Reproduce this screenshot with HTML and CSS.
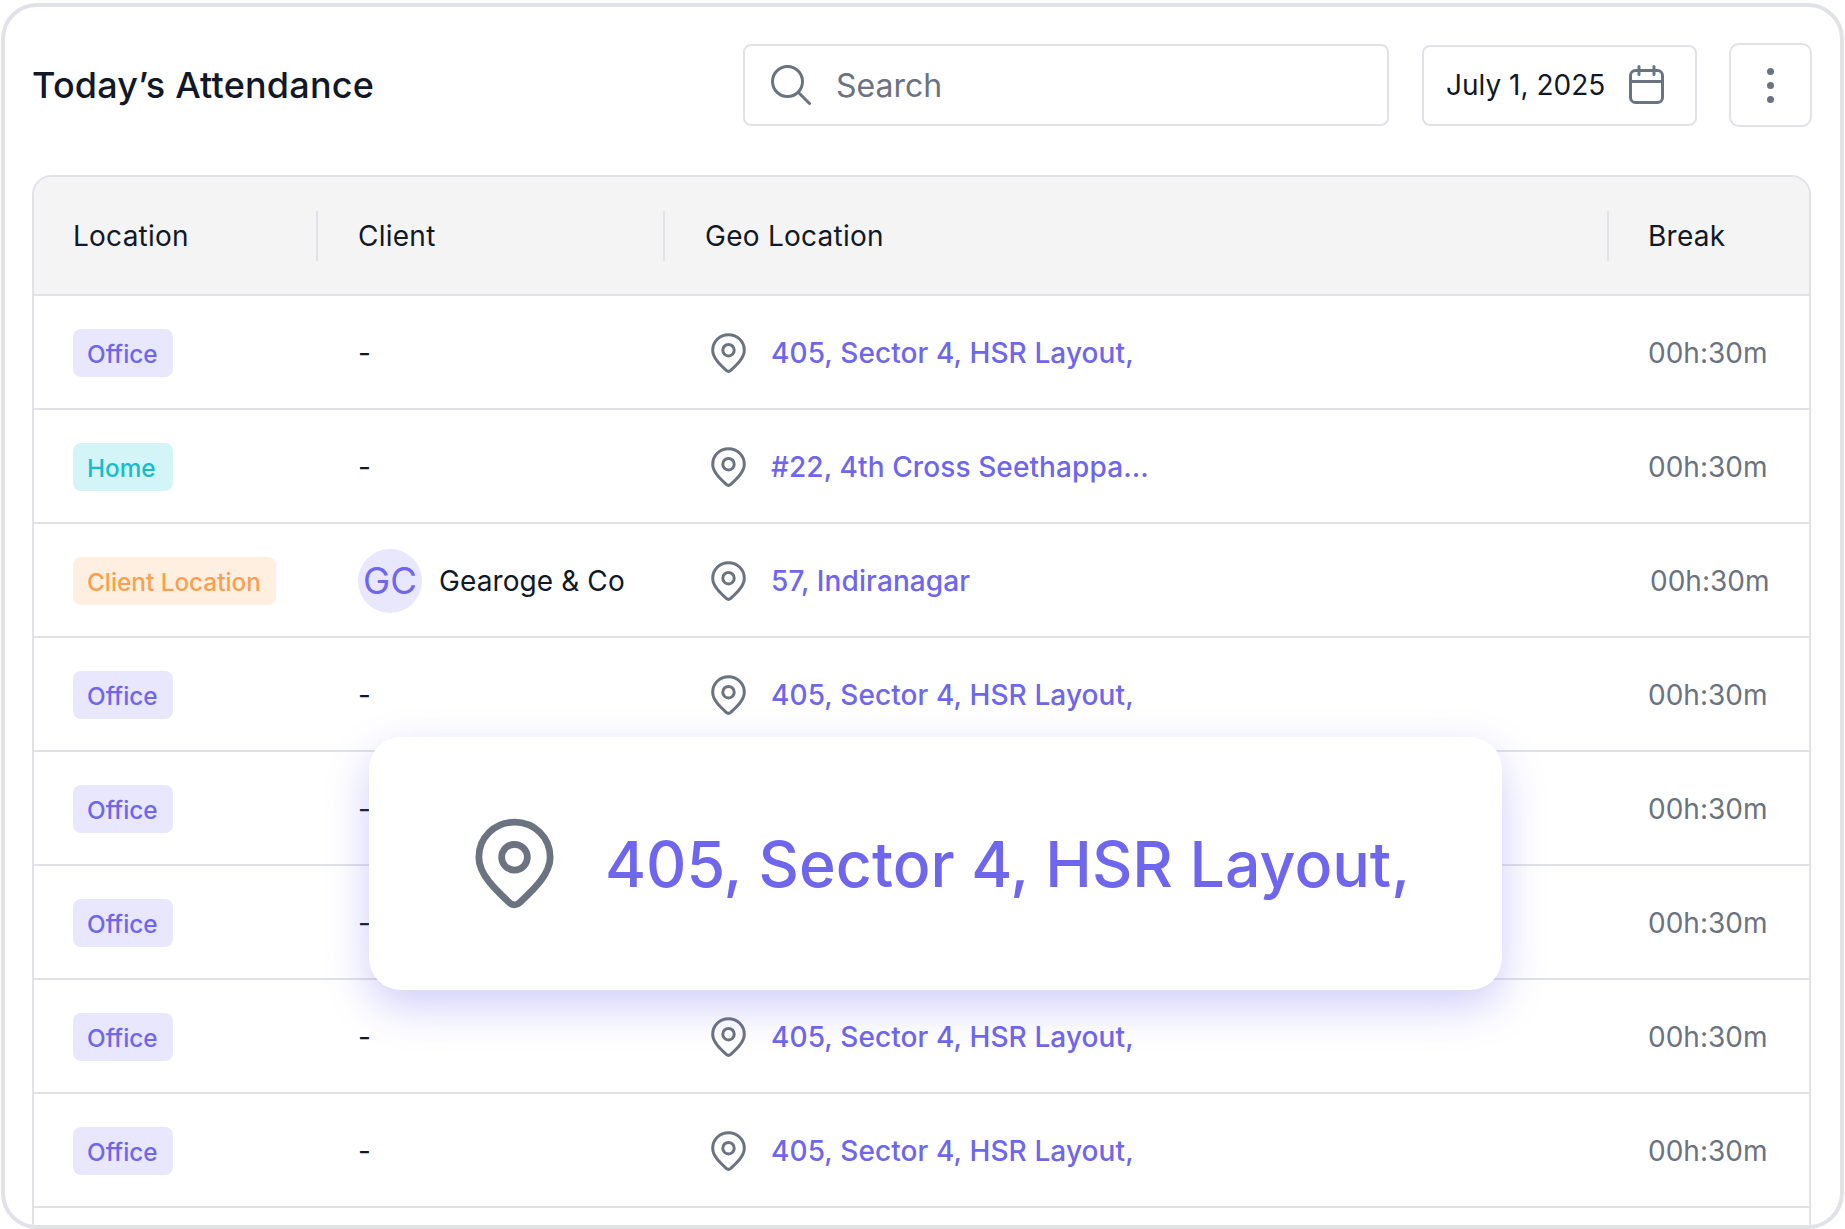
FILE: index.html
```html
<!DOCTYPE html>
<html lang="en">
<head>
<meta charset="utf-8">
<title>Today's Attendance</title>
<link rel="stylesheet" href="styles.css">
</head>
<body>
<svg class="defs" width="0" height="0" aria-hidden="true">
  <symbol id="pin" viewBox="0 0 35 40">
    <path d="M17.5 1.7C8.6 1.7 1.7 8.6 1.7 17.2c0 7.6 7.4 14.4 13.6 20.2 1.3 1.2 3.1 1.2 4.4 0 6.2-5.8 13.6-12.6 13.6-20.2C33.3 8.6 26.4 1.7 17.5 1.7Z" fill="none" stroke="currentColor" stroke-width="3" stroke-linejoin="round"/>
    <circle cx="17.5" cy="17.2" r="5.7" fill="none" stroke="currentColor" stroke-width="3"/>
  </symbol>
</svg>
<main class="card">
  <header class="top">
    <h1 class="title">Today’s Attendance</h1>
    <div class="search">
      <svg class="search-icon" viewBox="0 0 40 40" aria-hidden="true"><circle cx="16.5" cy="16.5" r="15" fill="none" stroke="currentColor" stroke-width="3"/><path d="M27.5 27.5 38.5 38.5" fill="none" stroke="currentColor" stroke-width="3" stroke-linecap="round"/></svg>
      <span class="search-text">Search</span>
    </div>
    <div class="date">
      <span>July 1, 2025</span>
      <svg class="cal-icon" viewBox="0 0 35 39" aria-hidden="true"><rect x="1.5" y="5.5" width="32" height="32" rx="5" fill="none" stroke="currentColor" stroke-width="3"/><path d="M1.5 16.5h32M10 1.5v8M25 1.5v8" fill="none" stroke="currentColor" stroke-width="3" stroke-linecap="round"/></svg>
    </div>
    <button class="more" type="button" aria-label="More">
      <span class="dot"></span><span class="dot"></span><span class="dot"></span>
    </button>
  </header>

  <section class="table">
    <div class="row head">
      <div class="cell"><span>Location</span></div>
      <div class="cell"><span>Client</span></div>
      <div class="cell"><span>Geo Location</span></div>
      <div class="cell head-break"><span>Break</span></div>
    </div>

    <div class="row">
      <div class="cell"><span class="badge office">Office</span></div>
      <div class="cell dash">-</div>
      <div class="cell geo"><svg class="pin"><use href="#pin"/></svg><a class="addr">405, Sector 4, HSR Layout,</a></div>
      <div class="cell break">00h:30m</div>
    </div>
    <div class="row">
      <div class="cell"><span class="badge home">Home</span></div>
      <div class="cell dash">-</div>
      <div class="cell geo"><svg class="pin"><use href="#pin"/></svg><a class="addr">#22, 4th Cross Seethappa...</a></div>
      <div class="cell break">00h:30m</div>
    </div>
    <div class="row">
      <div class="cell"><span class="badge client">Client Location</span></div>
      <div class="cell client-cell"><span class="avatar">GC</span><span>Gearoge &amp; Co</span></div>
      <div class="cell geo"><svg class="pin"><use href="#pin"/></svg><a class="addr">57, Indiranagar</a></div>
      <div class="cell break shifted">00h:30m</div>
    </div>
    <div class="row">
      <div class="cell"><span class="badge office">Office</span></div>
      <div class="cell dash">-</div>
      <div class="cell geo"><svg class="pin"><use href="#pin"/></svg><a class="addr">405, Sector 4, HSR Layout,</a></div>
      <div class="cell break">00h:30m</div>
    </div>
    <div class="row">
      <div class="cell"><span class="badge office">Office</span></div>
      <div class="cell dash">-</div>
      <div class="cell geo"><svg class="pin"><use href="#pin"/></svg><a class="addr">405, Sector 4, HSR Layout,</a></div>
      <div class="cell break">00h:30m</div>
    </div>
    <div class="row">
      <div class="cell"><span class="badge office">Office</span></div>
      <div class="cell dash">-</div>
      <div class="cell geo"><svg class="pin"><use href="#pin"/></svg><a class="addr">405, Sector 4, HSR Layout,</a></div>
      <div class="cell break">00h:30m</div>
    </div>
    <div class="row">
      <div class="cell"><span class="badge office">Office</span></div>
      <div class="cell dash">-</div>
      <div class="cell geo"><svg class="pin"><use href="#pin"/></svg><a class="addr">405, Sector 4, HSR Layout,</a></div>
      <div class="cell break">00h:30m</div>
    </div>
    <div class="row">
      <div class="cell"><span class="badge office">Office</span></div>
      <div class="cell dash">-</div>
      <div class="cell geo"><svg class="pin"><use href="#pin"/></svg><a class="addr">405, Sector 4, HSR Layout,</a></div>
      <div class="cell break">00h:30m</div>
    </div>
    <div class="row filler"></div>
  </section>

  <aside class="popup">
    <svg class="popup-pin"><use href="#pin"/></svg>
    <span class="popup-text">405, Sector 4, HSR Layout,</span>
  </aside>
</main>
</body>
</html>
```

FILE: styles.css
```css
* { box-sizing: border-box; }

html, body {
  margin: 0;
  height: 1229px;
  overflow: hidden;
  background: #fff;
}

body {
  padding: 3px 1px 0 1px;
  font-family: "Inter", "Liberation Sans", sans-serif;
  color: #111827;
}

.defs { position: absolute; }

.card {
  position: relative;
  height: 1226px;
  border: 4px solid #e0e2e8;
  border-radius: 36px;
  padding: 37px 28px 0 27px;
  overflow: hidden;
  background: #fff;
}

.top {
  display: flex;
  align-items: center;
  height: 82px;
  margin-bottom: 49px;
}

.title {
  margin: 0 auto 0 0;
  font-size: 36px;
  font-weight: 500;
  letter-spacing: 0.2px;
  line-height: 1;
  color: #111827;
}

.search {
  display: flex;
  align-items: center;
  width: 646px;
  height: 82px;
  margin-right: 33px;
  padding-left: 26px;
  border: 2px solid #e0e2e8;
  border-radius: 8px;
}

.search-icon {
  width: 40px;
  height: 40px;
  margin-right: 25px;
  color: #6b7280;
}

.search-text {
  font-size: 32px;
  color: #6b7280;
}

.date {
  display: flex;
  align-items: center;
  justify-content: space-between;
  width: 275px;
  height: 81px;
  margin-right: 32px;
  padding: 0 31px 0 22px;
  border: 2px solid #e0e2e8;
  border-radius: 8px;
  font-size: 28px;
}

.cal-icon {
  width: 35px;
  height: 39px;
  margin-bottom: 2px;
  color: #6b7280;
}

.more {
  display: flex;
  flex-direction: column;
  align-items: center;
  justify-content: center;
  gap: 7px;
  flex: none;
  width: 83px;
  height: 84px;
  padding: 0;
  border: 2px solid #e0e2e8;
  border-radius: 10px;
  background: #fff;
}

.dot {
  width: 7px;
  height: 7px;
  border-radius: 50%;
  background: #6b7280;
}

.table {
  margin-right: 1px;
  border: 2px solid #e0e2e8;
  border-radius: 20px 20px 0 0;
  overflow: hidden;
}

.row {
  display: grid;
  grid-template-columns: 282px 347px 944px 1fr;
  align-items: center;
  height: 114px;
  padding-top: 1px;
  border-bottom: 2px solid #e0e2e8;
  font-size: 28px;
}

.head {
  height: 119px;
  padding-top: 0;
  background: #f4f4f5;
  letter-spacing: 0.25px;
}

.head .cell {
  height: 50px;
  border-left: 2px solid #e0e2e8;
  display: flex;
  align-items: center;
}

.head .cell:first-child { border-left: 0; }
.head .head-break { padding-left: 39px; }

.filler { height: 60px; border-bottom: 0; }

.cell {
  padding-left: 40px;
  white-space: nowrap;
}

.cell:first-child { padding-left: 39px; }
.dash { padding-left: 42px; }

.geo {
  display: flex;
  align-items: center;
  padding-left: 48px;
}

.pin {
  flex: none;
  width: 35px;
  height: 40px;
  margin-right: 25px;
  color: #6b7280;
}

.addr {
  font-weight: 500;
  letter-spacing: 0.1px;
  color: #6f66ee;
}

.break { padding-left: 41px; color: #6b7280; }
.shifted { padding-left: 43px; }

.badge {
  display: inline-block;
  height: 48px;
  padding: 0 15px 0 14px;
  border-radius: 8px;
  font-size: 24.3px;
  font-weight: 500;
  line-height: 50px;
}

.office { background: #e9e7fd; color: #6f66ee; }
.home { min-width: 100px; background: #d4f5f7; color: #14bccd; }
.client { background: #ffefe1; color: #fb9f4f; }

.client-cell {
  display: flex;
  align-items: center;
  gap: 17px;
  padding-left: 42px;
  letter-spacing: 0.1px;
}

.avatar {
  display: flex;
  align-items: center;
  justify-content: center;
  width: 64px;
  height: 64px;
  border-radius: 50%;
  background: #e9e7fd;
  color: #6f66ee;
  font-size: 36.5px;
}

.popup {
  position: absolute;
  left: 364px;
  top: 730px;
  display: flex;
  align-items: center;
  width: 1133px;
  height: 253px;
  padding-left: 106px;
  border-radius: 32px;
  background: #fff;
  box-shadow: 0 16px 44px rgba(108, 99, 238, 0.32);
}

.popup-pin {
  flex: none;
  width: 79px;
  height: 91px;
  margin-right: 51px;
  color: #6b7280;
}

.popup-text {
  font-size: 62.6px;
  font-weight: 500;
  color: #6f66ee;
  white-space: nowrap;
}
```
